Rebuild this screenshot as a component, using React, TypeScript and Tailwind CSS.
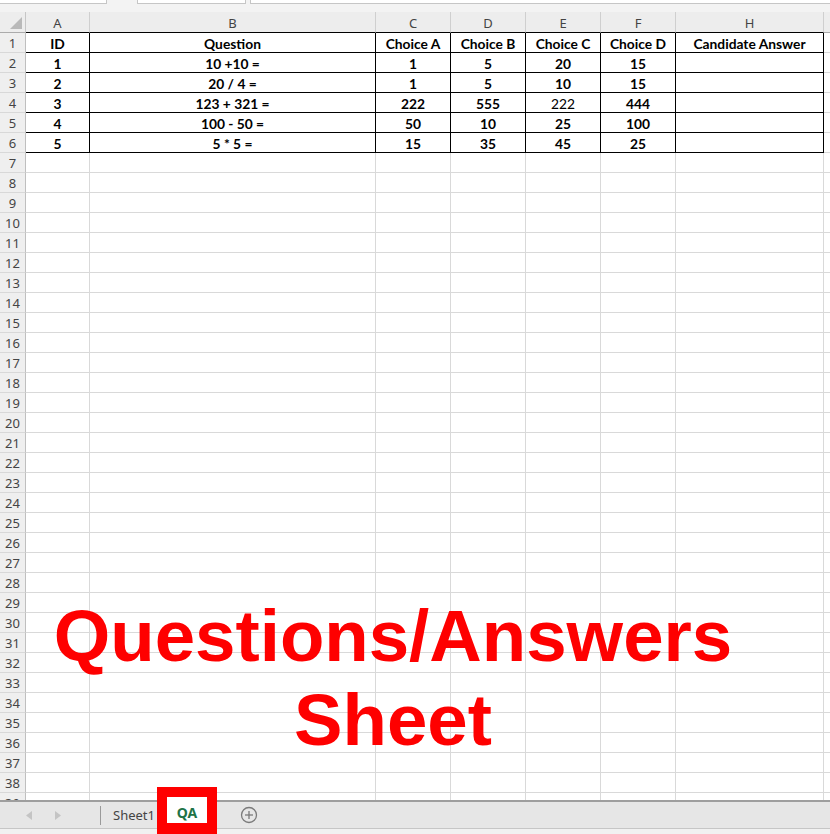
import React from "react";

type Cell = { t: string; r?: boolean };

const widths = ["w-[64px]", "w-[286px]", "w-[75px]", "w-[75px]", "w-[75px]", "w-[75px]", "w-[148px]"];
const letters = ["A", "B", "C", "D", "E", "F", "H"];

const table: Cell[][] = [
  [{ t: "ID" }, { t: "Question" }, { t: "Choice A" }, { t: "Choice B" }, { t: "Choice C" }, { t: "Choice D" }, { t: "Candidate Answer" }],
  [{ t: "1" }, { t: "10 +10 =" }, { t: "1" }, { t: "5" }, { t: "20" }, { t: "15" }, { t: "" }],
  [{ t: "2" }, { t: "20 / 4 =" }, { t: "1" }, { t: "5" }, { t: "10" }, { t: "15" }, { t: "" }],
  [{ t: "3" }, { t: "123 + 321 =" }, { t: "222" }, { t: "555" }, { t: "222", r: true }, { t: "444" }, { t: "" }],
  [{ t: "4" }, { t: "100 - 50 =" }, { t: "50" }, { t: "10" }, { t: "25" }, { t: "100" }, { t: "" }],
  [{ t: "5" }, { t: "5 * 5 =" }, { t: "15" }, { t: "35" }, { t: "45" }, { t: "25" }, { t: "" }],
];

const rows = Array.from({ length: 39 }, (_, i) => i + 1);

function Row({ n }: { n: number }) {
  const inTable = n <= 6;
  const data = inTable ? table[n - 1] : null;
  return (
    <div className="flex h-[20px] shrink-0">
      <div className="w-[26px] shrink-0 flex items-center justify-center bg-[#efefef] border-r border-b border-r-[#bfbfbf] border-b-[#d8d8d8] text-[13px] text-[#444] font-['Noto_Sans',sans-serif] leading-none pt-[1px]">
        {n}
      </div>
      {widths.map((w, i) => (
        <div
          key={i}
          className={`${w} shrink-0 flex items-center justify-center border-r border-b text-[13.8px] leading-none font-['Lato',sans-serif] text-black pt-[3px] ${
            inTable ? "border-black" : "border-[#d9d9d9]"
          } ${data && data[i].r ? "font-normal" : "font-bold"}`}
        >
          {data ? data[i].t : ""}
        </div>
      ))}
      <div className="flex-1 border-b border-[#d9d9d9]" />
    </div>
  );
}

export default function App() {
  return (
    <div className="relative w-[830px] h-[834px] overflow-hidden bg-white flex flex-col">
      {/* top strip (formula bar remnants) */}
      <div className="h-[12px] shrink-0 bg-[#f3f3f3] flex items-start">
        <div className="w-[107px] h-[4px] bg-white border-r border-b border-[#c6c6c6]" />
        <div className="w-[30px]" />
        <div className="w-[109px] h-[4px] bg-white border-l border-r border-b border-[#c6c6c6]" />
        <div className="w-[4px]" />
        <div className="flex-1 h-[4px] bg-white border-l border-b border-[#c6c6c6]" />
      </div>

      {/* column header */}
      <div className="flex h-[21px] shrink-0 bg-[#ededed]">
        <div className="w-[26px] shrink-0 relative border-r border-b border-r-[#c6c6c6] border-b-[#ababab]">
          <svg className="absolute right-[3px] bottom-[3px]" width="12" height="12" viewBox="0 0 12 12">
            <polygon points="12,0 12,12 0,12" fill="#b9b9b9" />
          </svg>
        </div>
        {widths.map((w, i) => (
          <div
            key={i}
            className={`${w} shrink-0 flex items-center justify-center border-r border-b border-r-[#cfcfcf] border-b-black text-[13px] text-[#444] font-['Noto_Sans',sans-serif] leading-none pt-[2px]`}
          >
            {letters[i]}
          </div>
        ))}
        <div className="flex-1 border-b border-[#ababab]" />
      </div>

      {/* grid rows */}
      <div className="flex-1 overflow-hidden flex flex-col">
        {rows.map((n) => (
          <Row key={n} n={n} />
        ))}
      </div>

      {/* sheet tab bar */}
      <div className="h-[28px] shrink-0 bg-[#e6e6e6] border-t-2 border-[#9e9e9e] flex items-center font-['Noto_Sans',sans-serif]">
        <div className="w-[100px] shrink-0 flex items-center">
          <svg className="ml-[26px]" width="6" height="9" viewBox="0 0 6 9">
            <polygon points="6,0 6,9 0,4.5" fill="#c4c4c4" />
          </svg>
          <svg className="ml-[23px]" width="6" height="9" viewBox="0 0 6 9">
            <polygon points="0,0 0,9 6,4.5" fill="#c4c4c4" />
          </svg>
        </div>
        <div className="w-px h-[19px] bg-[#9a9a9a] shrink-0" />
        <div className="w-[66px] shrink-0 pl-[12px] text-[13px] text-[#444] leading-none">Sheet1</div>
        <div className="w-[40px] h-[26px] shrink-0 bg-white flex items-center justify-center text-[14px] font-bold text-[#217346] leading-none -mt-[4px]">
          QA
        </div>
        <svg className="ml-[33px]" width="18" height="18" viewBox="0 0 18 18">
          <circle cx="9" cy="9" r="7.5" fill="none" stroke="#7a7a7a" strokeWidth="1.3" />
          <line x1="9" y1="5" x2="9" y2="13" stroke="#7a7a7a" strokeWidth="1.3" />
          <line x1="5" y1="9" x2="13" y2="9" stroke="#7a7a7a" strokeWidth="1.3" />
        </svg>
      </div>

      {/* status bar */}
      <div className="h-[6px] shrink-0 bg-[#f1f1f1] border-t border-[#c6c6c6]" />

      {/* red annotation frame around QA tab */}
      <div className="absolute left-[157px] top-[787px] w-[60px] h-[47px] border-[10px] border-b-[11px] border-[#ff0000]" />

      {/* big red annotation text */}
      <div className="absolute left-0 top-[594px] w-[786px] text-center text-[#fe0000] font-['Liberation_Sans',Arial,sans-serif] font-bold text-[72.7px] leading-[84px] pointer-events-none">
        Questions/Answers
        <br />
        Sheet
      </div>
    </div>
  );
}
